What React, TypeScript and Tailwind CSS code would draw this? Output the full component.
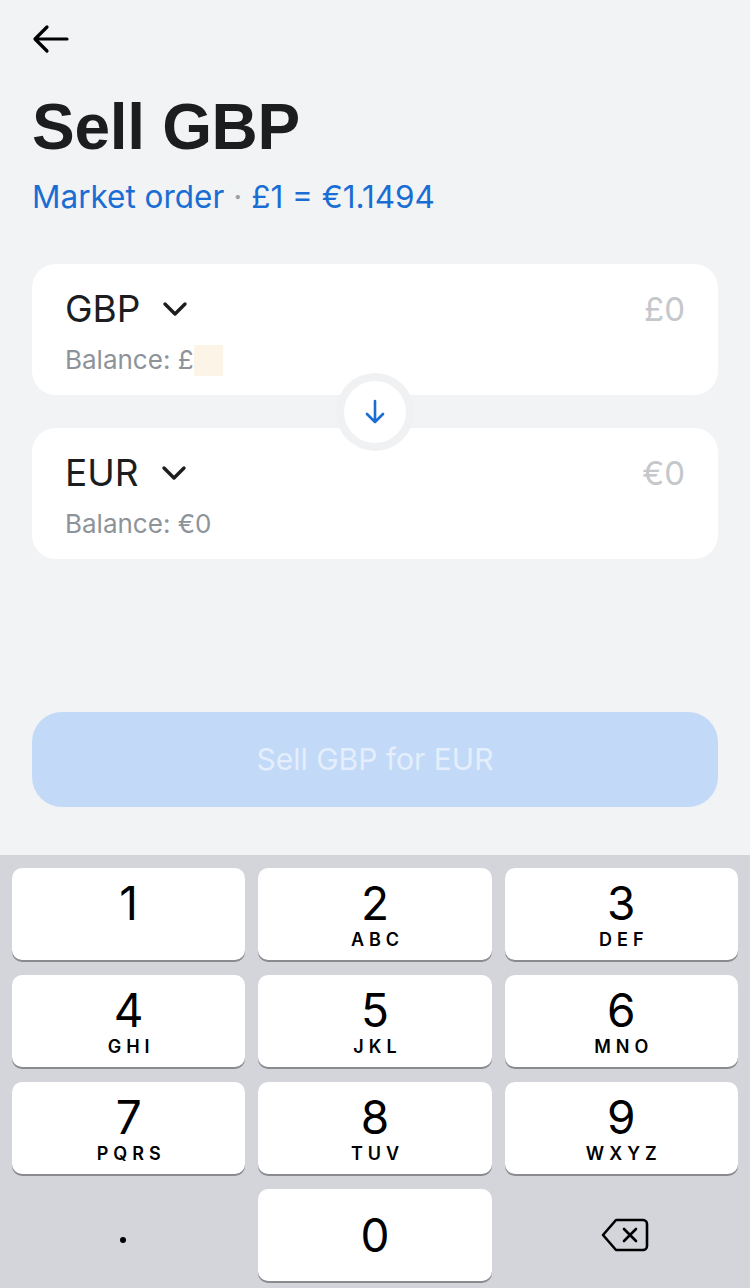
import React from "react"

const keys = [
  { d: "1", l: "" },
  { d: "2", l: "ABC" },
  { d: "3", l: "DEF" },
  { d: "4", l: "GHI" },
  { d: "5", l: "JKL" },
  { d: "6", l: "MNO" },
  { d: "7", l: "PQRS" },
  { d: "8", l: "TUV" },
  { d: "9", l: "WXYZ" },
]

function Chevron() {
  return (
    <svg width="26" height="16" viewBox="0 0 26 16" fill="none">
      <path d="M3 3l10 10 10-10" stroke="#1c1d1f" strokeWidth="3.4" strokeLinecap="round" strokeLinejoin="round" />
    </svg>
  )
}

function CurrencyCard({ code, amount, balance, masked }: { code: string; amount: string; balance: string; masked?: boolean }) {
  return (
    <div className="bg-white rounded-[24px] h-[131px] px-[33px] pt-[22px] flex justify-between">
      <div>
        <div className="flex items-center gap-[22px]">
          <span className="text-[37px] leading-[46px] text-[#1c1d1f]">{code}</span>
          <Chevron />
        </div>
        <div className="flex items-center mt-[12px] text-[26px] leading-[32px] text-[#8e9399]">
          <span>{balance}</span>
          {masked && <span className="inline-block w-[29px] h-[31px] bg-[#fdf4e8]" />}
        </div>
      </div>
      <div className="text-[33px] leading-[46px] text-[#c5c7cb]">{amount}</div>
    </div>
  )
}

export default function App() {
  return (
    <div className="w-[750px] h-[1288px] bg-[#f2f3f5] flex flex-col" style={{ fontFamily: "Inter, 'Liberation Sans', sans-serif" }}>
      <div className="flex-1 px-[32px] flex flex-col">
        {/* Back */}
        <div className="pt-[24px] h-[56px]">
          <svg width="38" height="30" viewBox="0 0 38 30" fill="none">
            <path d="M35 15H4M15 3L3 15l12 12" stroke="#000" strokeWidth="3.2" strokeLinecap="round" strokeLinejoin="round" />
          </svg>
        </div>

        {/* Title */}
        <h1 className="mt-[35px] text-[64px] leading-[72px] font-bold text-[#1c1d1f] tracking-[-0.3px]" style={{ fontFamily: "'Liberation Sans', Arial, sans-serif" }}>
          Sell GBP
        </h1>
        <div className="mt-[14px] text-[31.5px] leading-[40px] text-[#1a6dd3]">
          Market order <span className="text-[#9aa0a8]">·</span> £1 = €1.1494
        </div>

        {/* Cards */}
        <div className="mt-[47px] relative flex flex-col gap-[33px]">
          <CurrencyCard code="GBP" amount="£0" balance="Balance: £" masked />
          <CurrencyCard code="EUR" amount="€0" balance="Balance: €0" />
          <div className="absolute left-1/2 top-[109px] -translate-x-1/2 w-[78px] h-[78px] rounded-full bg-[#f0f1f3] flex items-center justify-center">
            <div className="w-[62px] h-[62px] rounded-full bg-white flex items-center justify-center">
              <svg width="22" height="28" viewBox="0 0 22 28" fill="none">
                <path d="M11 3v21M3 16l8 8 8-8" stroke="#1a6dd3" strokeWidth="2.6" strokeLinecap="round" strokeLinejoin="round" />
              </svg>
            </div>
          </div>
        </div>

        <div className="flex-1" />

        {/* Button */}
        <div className="mb-[48px] h-[95px] rounded-[30px] bg-[#c2daf7] flex items-center justify-center text-[30px] text-[#e4eefc]">
          Sell GBP for EUR
        </div>
      </div>

      {/* Keyboard */}
      <div className="h-[433px] bg-[#d3d5da] px-[12px] pt-[13px] grid grid-cols-3 gap-x-[13px] gap-y-[15px] auto-rows-[92px]">
        {keys.map((k) => (
          <div key={k.d} className="bg-white rounded-[10px] shadow-[0_2px_0_#8a8b8f] flex flex-col items-center pt-[8px]">
            <span className="text-[46px] leading-[54px] text-black">{k.d}</span>
            <span className="text-[18px] leading-[20px] font-semibold tracking-[5px] pl-[5px] text-black">{k.l}</span>
          </div>
        ))}
        <div className="flex items-center justify-center pr-[12px]">
          <span className="w-[6px] h-[6px] rounded-full bg-black mt-[10px]" />
        </div>
        <div className="bg-white rounded-[10px] shadow-[0_2px_0_#8a8b8f] flex items-center justify-center">
          <span className="text-[46px] leading-[54px] text-black">0</span>
        </div>
        <div className="flex items-center justify-center pl-[8px]">
          <svg width="48" height="36" viewBox="0 0 48 36" fill="none">
            <path d="M15 3h27a4 4 0 0 1 4 4v22a4 4 0 0 1-4 4H15L2 18 15 3z" stroke="#000" strokeWidth="2.6" strokeLinejoin="round" />
            <path d="M23 12l12 12M35 12L23 24" stroke="#000" strokeWidth="2.6" strokeLinecap="round" />
          </svg>
        </div>
      </div>
    </div>
  )
}
